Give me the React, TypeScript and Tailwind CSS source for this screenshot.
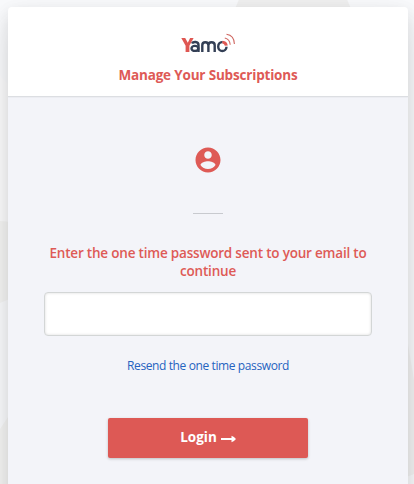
import React from 'react';

function Backdrop() {
  return (
    <svg className="absolute inset-0 h-full w-full" viewBox="0 0 414 484" aria-hidden="true">
      <rect width="414" height="484" fill="#f9fafc" />
      <path d="M235 9 L242 -8 H344 L351 9 Z" fill="#f0f0f0" />
      <path d="M0 75 L12 88 V222 L0 221 Z" fill="#fbfbfc" />
      <path d="M0 221 L12 222 V298 L0 303 Z" fill="#f4f4f3" />
      <path d="M0 429 L12 411 V484 H0 Z" fill="#f4f4f3" />
      <path d="M404 320 L414 380 V474 L404 478 Z" fill="#f2f2f2" />
    </svg>
  );
}

function Logo() {
  return (
    <svg width="56" height="22" viewBox="0 0 56 22" aria-label="Yamo">
      <g fill="none" stroke="#333f55" strokeWidth="2.4">
        <path d="M12 10.6 C13 8.4 18.5 8.1 18.5 12 V19" />
        <ellipse cx="14.9" cy="15.4" rx="3.4" ry="2.5" />
        <path d="M22.3 19 V12.2 Q22.3 9.2 25.3 9.2 Q28.4 9.2 28.4 12.2 V19 M28.4 12.2 Q28.4 9.2 31.5 9.2 Q34.7 9.2 34.7 12.2 V19" />
        <path d="M42.6 9.2 C39.8 8.8 38.2 11 38.2 13.7 C38.2 19.4 46.4 19.4 46.5 13.7" />
      </g>
      <path d="M1.3 5 H5.2 L7.8 9.8 L10.1 5 H13.6 L9.4 12.8 V19 H5.6 V12.8 Z" fill="#df5752" />
      <path d="M42.6 7.8 Q47 8.2 47.8 12.4 L44.8 12.8 Q44.6 10.7 42.2 10.2 Z" fill="#df5752" />
      <g fill="none" stroke="#cf6660" strokeWidth="1.1">
        <path d="M44.8 5 Q49.8 6.1 50.2 11.8" />
        <path d="M46.5 1.3 Q54.2 2.5 54.4 11" />
      </g>
    </svg>
  );
}

function AccountIcon() {
  return (
    <svg width="30" height="30" viewBox="0 0 24 24" fill="#de5a56" aria-hidden="true">
      <path d="M12 2C6.48 2 2 6.48 2 12s4.48 10 10 10 10-4.48 10-10S17.52 2 12 2zm0 3c1.66 0 3 1.34 3 3s-1.34 3-3 3-3-1.34-3-3 1.34-3 3-3zm0 14.2c-2.5 0-4.71-1.28-6-3.22.03-1.99 4-3.08 6-3.08 1.99 0 5.97 1.09 6 3.08-1.29 1.94-3.5 3.22-6 3.22z" />
    </svg>
  );
}

export default function App() {
  return (
    <div className="relative h-[484px] w-[414px] overflow-hidden px-[8px] pt-[7px] font-['Open_Sans','Noto_Sans',sans-serif]">
      <Backdrop />
      <main className="relative h-[560px] w-[400px] rounded-[4px] bg-[#f3f4f9] shadow-[0_15px_35px_rgba(50,50,50,0.13),0_5px_15px_rgba(0,0,0,0.09)]">
        <header className="flex h-[90px] flex-col items-center rounded-t-[4px] border-b border-[#dcdee2] bg-white pt-[26px] shadow-[0_1px_1px_rgba(0,0,0,0.03)]">
          <Logo />
          <h1 className="mt-[10px] text-[13.5px] leading-[20px] font-bold tracking-[-0.18px] whitespace-nowrap text-[#de5a56]">Manage Your Subscriptions</h1>
        </header>
        <form className="flex flex-col items-center" onSubmit={(e) => e.preventDefault()}>
          <div className="mt-[48px] h-[30px]"><AccountIcon /></div>
          <hr className="mt-[38px] w-[30px] border-0 border-t border-[#c8cacf]" />
          <label htmlFor="otp" className="mt-[30px] mb-[1px] w-[328px] text-center text-[13.5px] leading-[18px] font-semibold tracking-[-0.2px] text-[#de5a56]">
            <span className="block whitespace-nowrap">Enter the one time password sent to your email to</span>
            <span className="block">continue</span>
          </label>
          <input id="otp" className="mt-[11px] h-[44px] w-[328px] rounded-[4px] border border-[#d3d6d6] bg-white px-3 shadow-[inset_0_0_3px_rgba(0,0,0,0.15)] outline-none" />
          <a className="mt-[20px] text-[12px] leading-[20px] tracking-[-0.39px] whitespace-nowrap text-[#2563c0]">Resend the one time password</a>
          <button className="mt-[42px] flex h-[40px] w-[200px] items-center justify-center gap-[4px] rounded-[2px] bg-[#dd5955] pb-[2px] text-[13.5px] font-bold text-white shadow-[0_1px_3px_rgba(0,0,0,0.22)]">
            <span>Login</span>
            <svg className="mt-[4px]" width="15" height="8" viewBox="0 0 15 8" fill="white" aria-hidden="true">
              <path d="M0 3 H10.5 V0.8 Q13.2 1.6 15 4 Q13.2 6.4 10.5 7.2 V5 H0 Z" />
            </svg>
          </button>
        </form>
      </main>
    </div>
  );
}
